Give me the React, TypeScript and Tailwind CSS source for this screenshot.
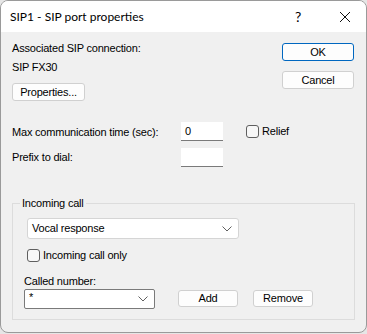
import { ReactNode } from 'react';

const uiFont = { fontFamily: '"Liberation Sans", Arial, sans-serif' };
const titleFont = { fontFamily: 'Lato, "Liberation Sans", sans-serif' };

function Chevron() {
  return (
    <svg width="10" height="6" viewBox="0 0 10 6" className="shrink-0">
      <path d="M0.5 0.5 L5 5 L9.5 0.5" fill="none" stroke="#606060" strokeWidth="1" />
    </svg>
  );
}

function WinButton({ children, primary, className }: { children: ReactNode; primary?: boolean; className?: string }) {
  return (
    <button
      className={`flex items-center justify-center rounded-[3px] border bg-[#fdfdfd] text-[11px] text-black ${
        primary ? 'border-[#0067c0]' : 'border-[#d0d0d0]'
      } ${className ?? ''}`}
    >
      {children}
    </button>
  );
}

function CheckBox({ label }: { label: string }) {
  return (
    <label className="flex items-center gap-[3px] text-[11px] text-black">
      <span className="h-[13px] w-[13px] rounded-[3px] border border-[#5f5f5f] bg-[#f7f7f7]" />
      <span>{label}</span>
    </label>
  );
}

function TextBox({ value }: { value?: string }) {
  return (
    <div className="flex h-[19px] w-[42px] items-center border-b border-[#7a7a7a] bg-white pl-[4px] text-[11px] text-black">
      {value}
    </div>
  );
}

export default function App() {
  return (
    <div className="h-[334px] w-[367px] bg-[#e6e6e6] tracking-[-0.2px]" style={uiFont}>
      <div className="flex h-[333px] w-[367px] flex-col overflow-hidden rounded-[8px] border border-[#9a9a9a] bg-[#f0f0f0]">
        {/* タイトルバー */}
        <div className="flex h-[31px] shrink-0 items-center bg-white">
          <span className="pl-[9px] text-[12px] tracking-normal text-black" style={titleFont}>SIP1 - SIP port properties</span>
          <span className="ml-auto mr-[38px] text-[14px] text-black" style={titleFont}>?</span>
          <svg width="12" height="12" viewBox="0 0 12 12" className="mr-[15px]">
            <path d="M1 1 L11 11 M11 1 L1 11" stroke="#111" strokeWidth="1" />
          </svg>
        </div>

        {/* 上部: 接続情報 + OK/Cancel */}
        <div className="flex">
          <div className="flex flex-col pl-[11px] pt-[9px]">
            <span className="leading-[15px] text-[11px] text-black">Associated SIP connection:</span>
            <span className="mt-[4px] leading-[15px] text-[11px] text-black">SIP FX30</span>
            <WinButton className="mt-[8px] h-[18px] w-[73px]">Properties...</WinButton>
          </div>
          <div className="ml-auto mr-[12px] flex flex-col pt-[11px]">
            <WinButton primary className="h-[18px] w-[72px]">OK</WinButton>
            <WinButton className="mt-[10px] h-[18px] w-[72px]">Cancel</WinButton>
          </div>
        </div>

        {/* 通話時間 / プレフィックス */}
        <div className="mt-[21px] flex items-start pl-[11px]">
          <div className="flex flex-col">
            <div className="flex h-[19px] items-center">
              <span className="w-[169px] pt-[2px] text-[11px] text-black">Max communication time (sec):</span>
              <TextBox value="0" />
            </div>
            <div className="mt-[7px] flex h-[19px] items-center">
              <span className="w-[169px] text-[11px] text-black">Prefix to dial:</span>
              <TextBox />
            </div>
          </div>
          <div className="ml-[23px] mt-[1px]">
            <CheckBox label="Relief" />
          </div>
        </div>

        {/* 着信 */}
        <fieldset className="mx-[11px] mt-[29px] h-[124px] border border-[#dcdcdc] px-0">
          <legend className="ml-[7px] px-[2px] text-[11px] leading-[14px] text-black">Incoming call</legend>
          <div className="flex flex-col px-[14px]">
            <div className="mt-[8px] flex h-[21px] w-[212px] items-center justify-between rounded-[3px] border border-[#d5d5d5] bg-white pl-[4px] pr-[6px] text-[11px] text-black">
              <span>Vocal response</span>
              <Chevron />
            </div>
            <div className="mt-[8px]">
              <CheckBox label="Incoming call only" />
            </div>
            <div className="ml-[-3px] mt-[11px] text-[11px] leading-[13px] text-black">Called number:</div>
            <div className="ml-[-3px] mt-[1px] flex items-center">
              <div className="flex h-[20px] w-[131px] items-center justify-between rounded-[2px] border border-[#7a7a7a] bg-white pl-[4px] pr-[6px] text-[11px] text-black">
                <span className="-mt-[3px]">*</span>
                <Chevron />
              </div>
              <WinButton className="ml-[23px] h-[17px] w-[60px]">Add</WinButton>
              <WinButton className="ml-[15px] h-[17px] w-[60px]">Remove</WinButton>
            </div>
          </div>
        </fieldset>
      </div>
    </div>
  );
}
